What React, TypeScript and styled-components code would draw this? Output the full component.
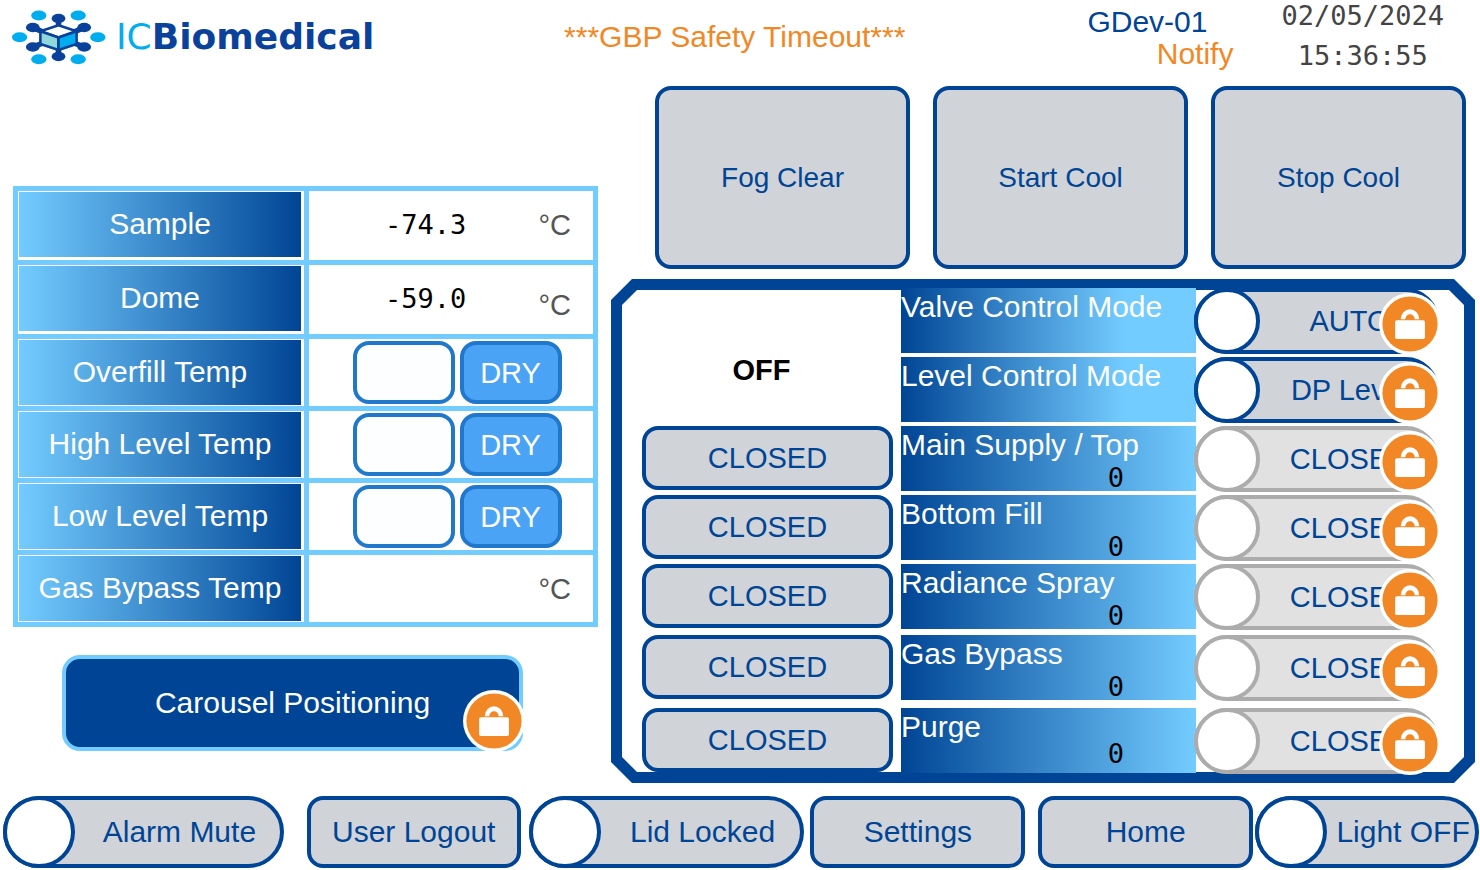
import React from "react";
import styled, { createGlobalStyle, css } from "styled-components";

const navy = "#004595";
const sky = "#73ccff";
const steel = "#d0d3d8";
const orange = "#f28825";
const mono = `"DejaVu Sans Mono", "Liberation Mono", monospace`;

const GlobalStyle = createGlobalStyle`
  *, *::before, *::after { box-sizing: border-box; }
  body {
    margin: 0;
    background: #fff;
    color: ${navy};
    font: 30px/34px "Liberation Sans", Arial, sans-serif;
  }
  button, input { font: inherit; color: inherit; }
`;

const Screen = styled.div`
  min-width: 1200px;
`;

/* ---------- header ---------- */

const Header = styled.header`
  display: flex;
  align-items: center;
  height: 72px;
  padding: 0 36px 0 12px;
`;

const Brand = styled.div`
  display: flex;
  align-items: center;
  gap: 10px;
  width: 370px;
  padding-top: 2px;
  font: bold 36px/40px "DejaVu Sans", sans-serif;
  color: #0a429b;
`;

const BrandLight = styled.span`
  font-weight: normal;
  color: #00aeef;
`;

const Alert = styled.h1`
  flex: 1;
  margin: 0;
  padding-top: 2px;
  font-size: 30px;
  line-height: 34px;
  font-weight: normal;
  text-align: center;
  color: ${orange};
`;

const Device = styled.div`
  display: flex;
  flex-direction: column;
  width: 146px;
  margin-right: 48px;
  padding-top: 4px;
  line-height: 32px;
`;

const Notify = styled.span`
  align-self: flex-end;
  color: ${orange};
`;

const Clock = styled.time`
  display: flex;
  flex-direction: column;
  align-items: center;
  font-family: ${mono};
  font-size: 27px;
  line-height: 40px;
  color: #444;
`;

/* ---------- shared controls ---------- */

const PushButton = styled.button<{ $basis?: number; $gap?: number }>`
  flex: 1 1 ${(p) => p.$basis ?? 100}px;
  min-width: 0;
  margin: 0 ${(p) => p.$gap ?? 0}px 0 0;
  padding: 0;
  border: 4px solid ${navy};
  border-radius: 16px;
  background: ${steel};
  white-space: nowrap;
`;

const ToggleBox = styled.label<{ $basis?: number; $gap?: number; $disabled?: boolean; $size: number }>`
  --edge: ${(p) => (p.$disabled ? "#acacac" : navy)};
  position: relative;
  display: flex;
  align-items: center;
  flex: 1 1 ${(p) => p.$basis ?? 100}px;
  min-width: 0;
  height: ${(p) => p.$size}px;
  margin-right: ${(p) => p.$gap ?? 0}px;
  border: 4px solid var(--edge);
  border-radius: 36px;
  background: ${(p) => (p.$disabled ? "#e1e1e1" : steel)};
`;

const Knob = styled.input<{ $size: number }>`
  appearance: none;
  flex: none;
  width: ${(p) => p.$size}px;
  height: ${(p) => p.$size}px;
  margin: -4px 0 -4px -4px;
  border: 4px solid var(--edge);
  border-radius: 50%;
  background: #fff;
`;

const ToggleText = styled.span`
  flex: 1;
  padding-left: 4px;
  text-align: center;
  white-space: nowrap;
`;

const Badge = styled.svg`
  position: absolute;
  width: 62px;
  height: 62px;
  right: -6px;
  bottom: -5px;
`;

const LockBadge = () => (
  <Badge viewBox="0 0 62 62" aria-hidden="true">
    <circle cx="31" cy="31" r="31" fill="#fff" />
    <circle cx="31" cy="31" r="27.6" fill={orange} />
    <path
      d="M21.7 26.2a9.3 10 0 0 1 18.6 0h-4.6a4.7 5 0 0 0-9.4 0z"
      fill="#fff"
    />
    <rect x="16.1" y="27.2" width="29.8" height="18.8" rx="1.8" fill="#fff" />
  </Badge>
);

type ToggleProps = {
  label: string;
  size: number;
  basis?: number;
  gap?: number;
  disabled?: boolean;
  locked?: boolean;
};

const Toggle = ({ label, size, basis, gap, disabled, locked }: ToggleProps) => (
  <ToggleBox $size={size} $basis={basis} $gap={gap} $disabled={disabled}>
    <Knob type="checkbox" $size={size} disabled={disabled} />
    <ToggleText>{label}</ToggleText>
    {locked && <LockBadge />}
  </ToggleBox>
);

/* ---------- main area ---------- */

const Main = styled.main`
  display: grid;
  grid-template-columns: 585fr 864fr;
  column-gap: 13px;
  padding: 14px 5px 0 13px;
`;

const Readings = styled.section`
  display: flex;
  flex-direction: column;
  gap: 28px;
  padding-top: 100px;
`;

const TempTable = styled.table`
  width: 100%;
  table-layout: fixed;
  border-collapse: separate;
  border-spacing: 5px;
  background: ${sky};
`;

const TempRow = styled.tr`
  height: 67px;
  &:nth-child(-n + 2) {
    height: 69px;
  }
`;

const TempHead = styled.th`
  width: 286px;
  padding: 1px 3px 1px 1px;
  background: #fff;
  font-weight: normal;
  vertical-align: top;
  color: #fff;
`;

const TempName = styled.div`
  padding: 15px 0 16px;
  background: linear-gradient(90deg, ${sky}, ${navy});
  white-space: nowrap;
`;

const TempCell = styled.td`
  padding: 0;
  background: #fff;
  vertical-align: top;
`;

const Measure = styled.div`
  display: flex;
  align-items: center;
  height: 67px;
  padding: 0 22px 0 76px;
`;

const Value = styled.span`
  flex: 1;
  font-family: ${mono};
  font-size: 27px;
  color: #000;
`;

const Unit = styled.span<{ $low?: boolean }>`
  font-size: 29px;
  color: #555;
  ${(p) =>
    p.$low &&
    css`
      align-self: flex-end;
      padding-bottom: 10px;
    `}
`;

const Levels = styled.div`
  display: flex;
  justify-content: center;
  gap: 5px;
  padding: 2px 0 2px 12px;
`;

const Level = styled.span<{ $on?: boolean }>`
  display: flex;
  align-items: center;
  justify-content: center;
  width: 102px;
  height: 63px;
  border: 4px solid #1f78cc;
  border-radius: 16px;
  background: ${(p) => (p.$on ? "#4aa3f5" : "#fdfeff")};
  font-size: 29px;
  color: #fff;
`;

const Carousel = styled.button`
  position: relative;
  height: 96px;
  margin: 0 75px 0 49px;
  padding: 0;
  border: 4px solid ${sky};
  border-radius: 18px;
  background: ${navy};
  color: #fff;
`;

const Controls = styled.section`
  display: flex;
  flex-direction: column;
  gap: 10px;
`;

const Actions = styled.div`
  display: flex;
  gap: 23px;
  height: 183px;
  padding: 0 9px 0 44px;
  font-size: 28px;
`;

const Frame = styled.div`
  position: relative;
  padding: 9px 11px 10px;
  background: ${navy};
  clip-path: polygon(
    21px 0, calc(100% - 21px) 0, 100% 21px, 100% calc(100% - 21px),
    calc(100% - 21px) 100%, 21px 100%, 0 calc(100% - 21px), 0 21px
  );
  &::before {
    content: "";
    position: absolute;
    inset: 11px;
    background: #fff;
    clip-path: polygon(
      15px 0, calc(100% - 15px) 0, 100% 15px, 100% calc(100% - 15px),
      calc(100% - 15px) 100%, 15px 100%, 0 calc(100% - 15px), 0 15px
    );
  }
`;

const Valves = styled.div`
  position: relative;
  display: grid;
  grid-template-columns: 279fr 295fr 268fr;
  grid-template-rows: repeat(4, 69px) 71px 73px 65px;
  align-items: start;
  font-size: 29px;
`;

const Overall = styled.strong`
  grid-row: span 2;
  align-self: center;
  padding-top: 26px;
  text-align: center;
  color: #000;
`;

const ValveState = styled.div`
  display: flex;
  height: 64px;
  margin: 0 8px 0 20px;
`;

const ValveName = styled.div<{ $full?: boolean }>`
  display: flex;
  flex-direction: column;
  height: 65px;
  padding-top: 2px;
  background: linear-gradient(90deg, ${navy}, ${sky} ${(p) => (p.$full ? 76 : 100)}%);
  font-size: 30px;
  color: #fff;
  white-space: nowrap;
`;

const Count = styled.span<{ $raised?: boolean }>`
  align-self: flex-end;
  margin: ${(p) => (p.$raised ? "-4px" : "2px")} 72px 0 0;
  font-family: ${mono};
  font-size: 27px;
  line-height: 28px;
  color: #000;
`;

const ValveSwitch = styled.div`
  display: flex;
  margin: 0 25px 0 -2px;
`;

const Footer = styled.footer`
  display: flex;
  height: 72px;
  margin-top: 13px;
  padding: 0 1px 0 3px;
`;

/* ---------- data ---------- */

type Temp = { name: string; value?: string; level?: boolean; low?: boolean };

const temps: Temp[] = [
  { name: "Sample", value: "-74.3" },
  { name: "Dome", value: "-59.0", low: true },
  { name: "Overfill Temp", level: true },
  { name: "High Level Temp", level: true },
  { name: "Low Level Temp", level: true },
  { name: "Gas Bypass Temp" },
];

type Valve = { name: string; mode?: string; raised?: boolean };

const valves: Valve[] = [
  { name: "Valve Control Mode", mode: "AUTO" },
  { name: "Level Control Mode", mode: "DP Level" },
  { name: "Main Supply / Top" },
  { name: "Bottom Fill" },
  { name: "Radiance Spray" },
  { name: "Gas Bypass" },
  { name: "Purge", raised: true },
];

const knots = [
  [46.5, 8.5], [20.8, 17.5], [72.2, 17.5], [20.8, 37], [72.2, 37], [46.5, 46.5],
];
const satellites = [
  [26.8, 5.5], [66.2, 5.5], [7.6, 27.3], [85.8, 27.3], [26.8, 49.3], [66.2, 49.3],
];

const Logo = () => (
  <svg width="94" height="55" viewBox="0 0 94 55" aria-hidden="true">
    <path
      d="M46.5 8.5V16M20.8 17.5L31 22M72.2 17.5L62 22M20.8 37L31 33M72.2 37L62 33M46.5 46.5V39"
      stroke="#0a429b"
      strokeWidth="5.5"
    />
    <g stroke="#0a429b" strokeWidth="2.6" strokeLinejoin="round">
      <path d="M46.5 15.2L64.6 21.2L46.5 27.4L28.4 21.2Z" fill="#fff" />
      <path d="M28.4 21.2L46.5 27.4V40L28.4 34Z" fill="#8fd8dc" />
      <path d="M64.6 21.2L46.5 27.4V40L64.6 34Z" fill="#00aeef" />
    </g>
    {knots.map(([x, y]) => (
      <ellipse key={`${x}-${y}`} cx={x} cy={y} rx="6.9" ry="4.7" fill="#0a429b" />
    ))}
    {satellites.map(([x, y]) => (
      <ellipse key={`${x}-${y}`} cx={x} cy={y} rx="7.6" ry="5" fill="#00aeef" />
    ))}
  </svg>
);

export default function App() {
  return (
    <Screen>
      <GlobalStyle />
      <Header>
        <Brand>
          <Logo />
          <span>
            <BrandLight>IC</BrandLight>Biomedical
          </span>
        </Brand>
        <Alert>***GBP Safety Timeout***</Alert>
        <Device>
          <span>GDev-01</span>
          <Notify>Notify</Notify>
        </Device>
        <Clock>
          <span>02/05/2024</span>
          <span>15:36:55</span>
        </Clock>
      </Header>

      <Main>
        <Readings>
          <TempTable>
            <tbody>
              {temps.map((t) => (
                <TempRow key={t.name}>
                  <TempHead scope="row">
                    <TempName>{t.name}</TempName>
                  </TempHead>
                  <TempCell>
                    {t.level ? (
                      <Levels>
                        <Level />
                        <Level $on>DRY</Level>
                      </Levels>
                    ) : (
                      <Measure>
                        <Value>{t.value}</Value>
                        <Unit $low={t.low}>°C</Unit>
                      </Measure>
                    )}
                  </TempCell>
                </TempRow>
              ))}
            </tbody>
          </TempTable>
          <Carousel type="button">
            Carousel Positioning
            <LockBadge />
          </Carousel>
        </Readings>

        <Controls>
          <Actions>
            <PushButton type="button">Fog Clear</PushButton>
            <PushButton type="button">Start Cool</PushButton>
            <PushButton type="button">Stop Cool</PushButton>
          </Actions>
          <Frame>
            <Valves>
              <Overall>OFF</Overall>
              {valves.map((v) => (
                <React.Fragment key={v.name}>
                  {!v.mode && (
                    <ValveState>
                      <PushButton type="button">CLOSED</PushButton>
                    </ValveState>
                  )}
                  <ValveName $full={!!v.mode}>
                    {v.name}
                    {!v.mode && <Count $raised={v.raised}>0</Count>}
                  </ValveName>
                  <ValveSwitch>
                    <Toggle label={v.mode ?? "CLOSED"} size={66} disabled={!v.mode} locked />
                  </ValveSwitch>
                </React.Fragment>
              ))}
            </Valves>
          </Frame>
        </Controls>
      </Main>

      <Footer>
        <Toggle label="Alarm Mute" size={72} basis={281} gap={23} />
        <PushButton type="button" $basis={214} $gap={8}>User Logout</PushButton>
        <Toggle label="Lid Locked" size={72} basis={276} gap={6} />
        <PushButton type="button" $basis={215} $gap={13}>Settings</PushButton>
        <PushButton type="button" $basis={215} $gap={2}>Home</PushButton>
        <Toggle label="Light OFF" size={72} basis={224} />
      </Footer>
    </Screen>
  );
}
